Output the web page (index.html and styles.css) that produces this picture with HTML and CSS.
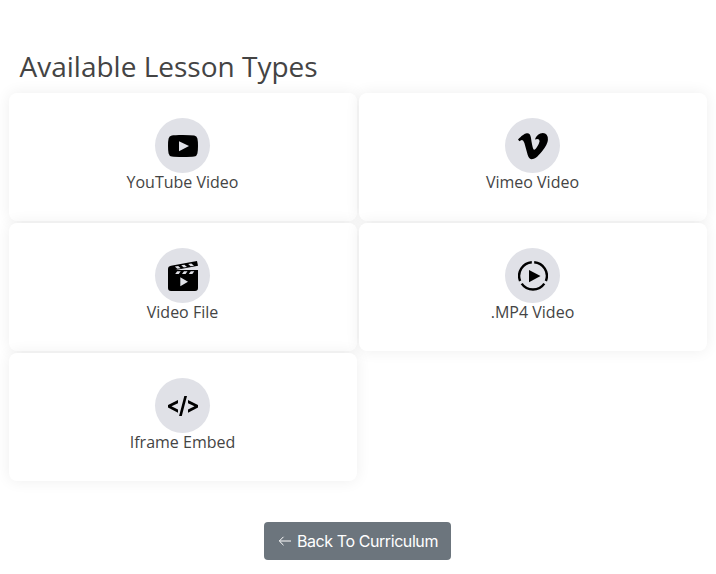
FILE: index.html
```html
<!DOCTYPE html>
<html lang="en">
<head>
<meta charset="utf-8">
<title>Available Lesson Types</title>
<link rel="stylesheet" href="styles.css">
</head>
<body>
<main class="page">
  <h1 class="title">Available Lesson Types</h1>
  <section class="grid">
    <a class="card">
      <span class="icon"><svg viewBox="0 0 30 30"><path fill-rule="evenodd" d="M15 4C9 4 5.500 4.200 3.800 4.500Q1.200 5 .6 7.600Q0 10 0 15T.6 22.400Q1.200 25 3.800 25.600Q7 26 15 26T26.200 25.600Q28.800 25 29.400 22.400Q30 20 30 15T29.400 7.600Q28.800 5 26.200 4.500Q23 4 15 4ZM11 10.200L21 15L11 20.200Z"/></svg></span>
      <span class="label">YouTube Video</span>
    </a>
    <a class="card">
      <span class="icon"><svg viewBox="0 0 30 30"><path d="M29.900 8.900Q29.700 13.300 23.700 20.800C19.500 26 16.500 28.200 13.700 28.200Q11.300 28.200 9.700 23.900L6.400 12Q5.300 8.900 4 8.900Q3.500 8.900 1.400 10.200L0 8.400C3.200 5.200 6.500 2.300 8.800 2.200Q12.200 1.800 12.900 6.400C13.700 11.800 14.900 18.800 16.200 18.800Q17.200 18.800 19.300 15.500Q21.300 12.200 21.500 10.500Q21.800 7.900 19.300 7.900Q18.200 7.900 16.900 8.500Q19.200 2 24.900 1.900Q30.100 2 29.900 8.900Z"/></svg></span>
      <span class="label">Vimeo Video</span>
    </a>
    <a class="card">
      <span class="icon"><svg viewBox="0 0 30 30"><path fill-rule="evenodd" d="M0 8Q0 5.200 3 4.700L29 0L30 4.800L7.500 9H30V27Q30 30 27 30H3Q0 30 0 27ZM6.800 5.600L9.300 7.800L12.700 7.200L10.200 4.900ZM13.200 4.300L15.800 6.600L19 6L16.400 3.700ZM20.200 3L22.700 5.300L26 4.700L23.400 2.400ZM9.200 10.300L7.200 12.900H10.700L12.700 10.300ZM16 10.300L14 12.900H17.500L19.500 10.300ZM22.800 10.300L20.800 12.900H24.300L26.300 10.300ZM12.300 16.300V25.300L20 20.800Z"/></svg></span>
      <span class="label">Video File</span>
    </a>
    <a class="card">
      <span class="icon"><svg viewBox="0 0 30 30"><path d="M11 9L22.500 15L11 21.300Z"/><path class="ring" d="M13.800 1.300A13.700 13.700 0 0 0 2.100 20M16.200 1.300A13.700 13.700 0 0 1 27.900 20M3.700 22.600A13.700 13.700 0 0 0 26.300 22.600"/></svg></span>
      <span class="label">.MP4 Video</span>
    </a>
    <a class="card">
      <span class="icon"><svg viewBox="0 0 30 30"><path d="M10 9V12.200L3.500 15.200L10 18.500V21.700L0 16.600V13.900ZM20 9V12.200L26.500 15.200L20 18.500V21.700L30 16.600V13.900ZM16.300 5H19L13.800 25H11.100Z"/></svg></span>
      <span class="label">Iframe Embed</span>
    </a>
  </section>
  <a class="back"><svg class="arrow" viewBox="0 0 14 14"><path d="M13 7H1.500M5.500 2.800L1.300 7L5.500 11.200"/></svg><span>Back To Curriculum</span></a>
</main>
</body>
</html>
```
FILE: styles.css
```css
* { box-sizing: border-box; }
body {
  margin: 0;
  background: #fff;
  color: #444;
  font-family: "Open Sans", sans-serif;
  font-size: 16px;
}
.page {
  display: flex;
  flex-direction: column;
  padding: 49px 9px 0;
}
.title {
  margin: 0 0 10px 10.5px;
  font-size: 28px;
  line-height: 34px;
  font-weight: 400;
}
.grid {
  display: grid;
  grid-template-columns: 348px 348px;
  grid-auto-rows: 128px;
  gap: 2px;
}
.card {
  display: flex;
  flex-direction: column;
  align-items: center;
  padding: 25px 1px 0 0;
  border-radius: 8px;
  background: #fff;
  box-shadow: 0 0 15px rgba(0, 0, 0, .07);
}
.icon {
  display: flex;
  align-items: center;
  justify-content: center;
  width: 55px;
  height: 55px;
  border-radius: 50%;
  background: #e0e1e7;
}
.icon svg { width: 30px; height: 30px; }
.ring { fill: none; stroke: #000; stroke-width: 2.4; }
.label { line-height: 19px; white-space: nowrap; }
.back {
  display: flex;
  align-items: center;
  align-self: center;
  justify-content: center;
  gap: 5px;
  width: 187px;
  height: 38px;
  margin: 41px 0 0 -1px;
  padding-left: 1px;
  border-radius: 4px;
  background: #6c757d;
  color: #fff;
  font-family: Inter, sans-serif;
  letter-spacing: -.42px;
  white-space: nowrap;
}
.arrow { width: 14px; height: 14px; fill: none; stroke: #fff; stroke-width: 1; }
```
